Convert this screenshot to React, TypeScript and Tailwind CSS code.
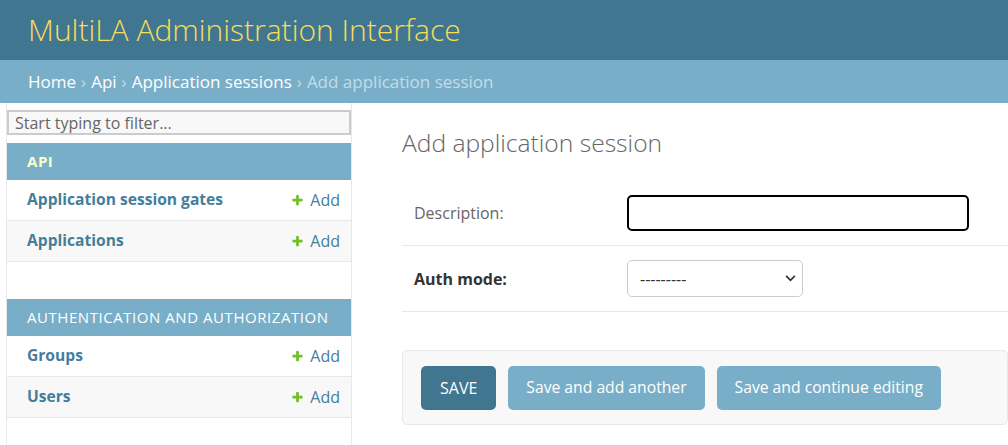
import { useState } from 'react'

interface Model {
  name: string
}

interface AppModule {
  title: string
  current?: boolean
  models: Model[]
}

const modules: AppModule[] = [
  {
    title: 'API',
    current: true,
    models: [{ name: 'Application session gates' }, { name: 'Applications' }],
  },
  {
    title: 'Authentication and Authorization',
    models: [{ name: 'Groups' }, { name: 'Users' }],
  },
]

const font = { fontFamily: '"Open Sans", "Noto Sans", sans-serif' }

function PlusIcon() {
  return (
    <svg viewBox="0 0 1792 1792" className="w-[13px] h-[13px]" fill="#70bf2b">
      <path d="M1600 736v192q0 40-28 68t-68 28h-416v416q0 40-28 68t-68 28h-192q-40 0-68-28t-28-68v-416h-416q-40 0-68-28t-28-68v-192q0-40 28-68t68-28h416v-416q0-40 28-68t68-28h192q40 0 68 28t28 68v416h416q40 0 68 28t28 68z" />
    </svg>
  )
}

function Sidebar() {
  const [filter, setFilter] = useState('')

  return (
    <nav className="ml-[6px] w-[346px] shrink-0 border-l border-r border-[#e8e8e8] pt-[7px]">
      <input
        value={filter}
        onChange={(e) => setFilter(e.target.value)}
        placeholder="Start typing to filter…"
        className="block w-full h-[25px] border-2 border-[#ccc] bg-[#f8f8f8] px-[6px] text-[16px] text-[#333] placeholder:text-[#666] outline-none"
      />
      {modules.map((mod, idx) => (
        <div key={mod.title} className={idx === 0 ? 'mt-[8px] mb-[37px]' : 'mb-[30px]'}>
          <div
            className={
              'h-[37px] flex items-center px-[20px] bg-[#79aec8] text-[15px] uppercase tracking-[0.55px] ' +
              (mod.current ? 'text-[#ffc] font-bold' : 'text-white')
            }
          >
            {mod.title}
          </div>
          {mod.models.map((m, i) => (
            <div
              key={m.name}
              className={
                'h-[41px] flex items-center justify-between pl-[20px] pr-[11px] border-b border-[#e8e8e8] ' +
                (i % 2 === 1 ? 'bg-[#f8f8f8]' : 'bg-white')
              }
            >
              <span className="text-[#447e9b] font-bold text-[15.6px]">{m.name}</span>
              <span className="flex items-center gap-[6px] text-[#447e9b] text-[16px]">
                <PlusIcon />
                Add
              </span>
            </div>
          ))}
        </div>
      ))}
    </nav>
  )
}

export default function App() {
  const [description, setDescription] = useState('')

  return (
    <div className="min-h-[445px] bg-white text-[#333]" style={font}>
      <header className="h-[60px] bg-[#417690] flex items-center pl-[28px]">
        <h1 className="text-[#f5dd5d] text-[30px] font-light leading-none">MultiLA Administration Interface</h1>
      </header>

      <div className="h-[43px] bg-[#79aec8] flex items-center pl-[28px] text-[17px] text-[#c4dce8]">
        <a className="text-white">Home</a>
        <span className="mx-[5px]">›</span>
        <a className="text-white">Api</a>
        <span className="mx-[5px]">›</span>
        <a className="text-white">Application sessions</a>
        <span className="mx-[5px]">›</span>
        <span>Add application session</span>
      </div>

      <div className="flex">
        <Sidebar />

        <main className="flex-1 pl-[50px] pt-[25px]">
          <h2 className="text-[24.6px] font-light text-[#666] leading-[30px]">Add application session</h2>

          <form className="mt-[22px]">
            <div className="h-[66px] flex items-center border-b border-[#e8e8e8] px-[12px]">
              <label className="w-[213px] text-[16px] text-[#666]">Description:</label>
              <input
                value={description}
                onChange={(e) => setDescription(e.target.value)}
                className="w-[342px] h-[36px] border-2 border-black rounded-[5px] px-[8px] text-[16px] outline-none"
              />
            </div>
            <div className="h-[66px] flex items-center border-b border-[#e8e8e8] px-[12px]">
              <label className="w-[213px] text-[16px] font-bold text-[#333]">Auth mode:</label>
              <div className="relative w-[176px] h-[37px]">
                <select className="appearance-none w-full h-full border border-[#ccc] rounded-[5px] bg-white pl-[12px] text-[16px] text-[#333] outline-none">
                  <option>---------</option>
                </select>
                <svg
                  viewBox="0 0 12 8"
                  className="absolute right-[7px] top-[15px] w-[11px] h-[7px] pointer-events-none"
                  fill="none"
                  stroke="#333"
                  strokeWidth="2"
                >
                  <path d="M1 1l5 5 5-5" />
                </svg>
              </div>
            </div>

            <div className="mt-[38px] h-[75px] flex items-center gap-[12px] px-[18px] bg-[#f8f8f8] border border-[#e8e8e8] rounded-[5px]">
              <button type="button" className="h-[44px] px-[19px] rounded-[5px] bg-[#417690] text-white text-[16px]">
                SAVE
              </button>
              <button type="button" className="h-[44px] px-[18px] rounded-[5px] bg-[#79aec8] text-white text-[15.7px]">
                Save and add another
              </button>
              <button type="button" className="h-[44px] px-[18px] rounded-[5px] bg-[#79aec8] text-white text-[15.7px]">
                Save and continue editing
              </button>
            </div>
          </form>
        </main>
      </div>
    </div>
  )
}
